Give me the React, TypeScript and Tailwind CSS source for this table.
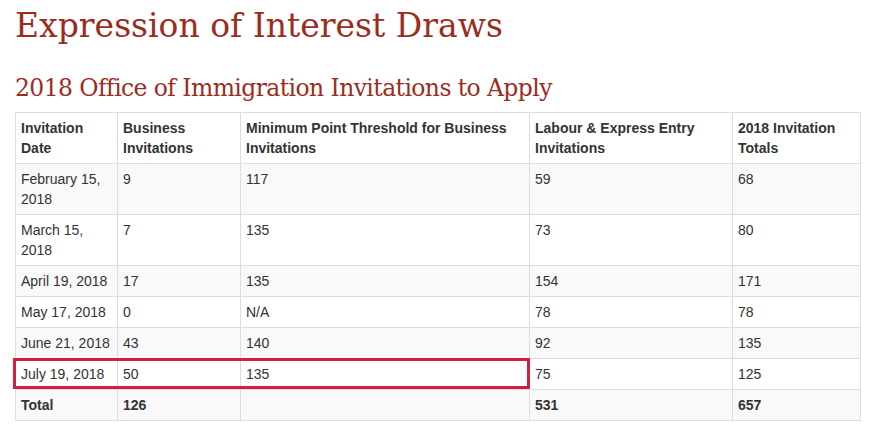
import React from "react";

const rows = [
  ["February 15, 2018", "9", "117", "59", "68"],
  ["March 15, 2018", "7", "135", "73", "80"],
  ["April 19, 2018", "17", "135", "154", "171"],
  ["May 17, 2018", "0", "N/A", "78", "78"],
  ["June 21, 2018", "43", "140", "92", "135"],
  ["July 19, 2018", "50", "135", "75", "125"],
];

const headers = [
  "Invitation Date",
  "Business Invitations",
  "Minimum Point Threshold for Business Invitations",
  "Labour & Express Entry Invitations",
  "2018 Invitation Totals",
];

const widths = ["w-[102px]", "w-[123px]", "w-[289px]", "w-[203px]", "w-[128px]"];

export default function App() {
  return (
    <div className="min-h-screen bg-white pl-[15px] pt-[6px] font-['Liberation_Sans',Arial,sans-serif] text-[14px] leading-[20px] text-[#333]">
      <h1 className="font-['DejaVu_Serif',serif] text-[33px] leading-[40px] text-[#9b2d1f]">
        Expression of Interest Draws
      </h1>
      <h2 className="mt-[27px] font-['DejaVu_Serif',serif] text-[23.5px] leading-[30px] text-[#9b2d1f] tracking-[-0.6px]">
        2018 Office of Immigration Invitations to Apply
      </h2>
      <div className="relative mt-[9px] w-[846px]">
        <table className="w-[846px] table-fixed border-collapse border border-[#ddd]">
          <colgroup>
            {widths.map((w, i) => (
              <col key={i} className={w} />
            ))}
          </colgroup>
          <thead>
            <tr>
              {headers.map((h) => (
                <th
                  key={h}
                  className="border border-[#ddd] px-[5px] py-[5px] text-left align-top font-bold"
                >
                  {h}
                </th>
              ))}
            </tr>
          </thead>
          <tbody>
            {rows.map((r, i) => (
              <tr key={i} className={i % 2 === 0 ? "bg-[#f9f9f9]" : "bg-white"}>
                {r.map((c, j) => (
                  <td key={j} className="border border-[#ddd] px-[5px] py-[5px] align-top">
                    {c}
                  </td>
                ))}
              </tr>
            ))}
            <tr className="bg-[#f9f9f9] font-bold">
              <td className="border border-[#ddd] px-[5px] py-[5px]">Total</td>
              <td className="border border-[#ddd] px-[5px] py-[5px]">126</td>
              <td className="border border-[#ddd] px-[5px] py-[5px]"></td>
              <td className="border border-[#ddd] px-[5px] py-[5px]">531</td>
              <td className="border border-[#ddd] px-[5px] py-[5px]">657</td>
            </tr>
          </tbody>
        </table>
        {/* highlight around the July row */}
        <div className="pointer-events-none absolute left-[-2px] top-[246px] h-[31px] w-[517px] border-[3px] border-[#d21f3c]" />
      </div>
    </div>
  );
}
